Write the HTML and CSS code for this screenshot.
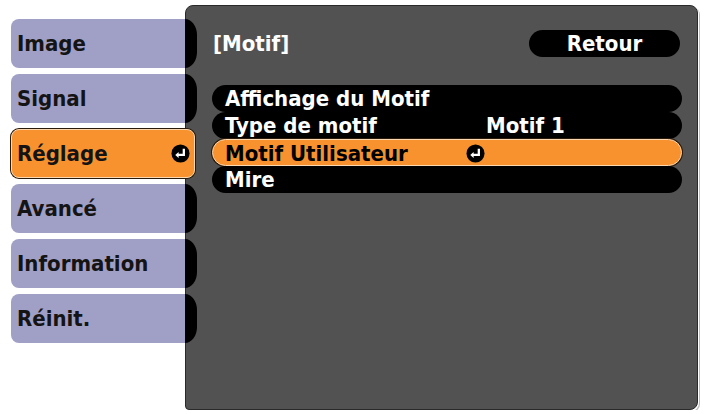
FILE: index.html
```html
<!DOCTYPE html>
<html lang="fr">
<head>
  <meta charset="UTF-8">
  <meta name="viewport" content="width=device-width, initial-scale=1.0">
  <title>Motif</title>
  <link rel="stylesheet" href="styles.css">
</head>
<body>
  <div class="tabs">
    <div class="tab">Image</div>
    <div class="tab">Signal</div>
    <div class="tab active">Réglage
      <svg class="enter" viewBox="0 0 20 20"><circle cx="10" cy="10" r="9.5" fill="#000"/><path d="M13.5 5v6.5H6.5" fill="none" stroke="#fff" stroke-width="2.4"/><path d="M4.5 11.5l3.5-3.2v6.4z" fill="#fff"/></svg>
    </div>
    <div class="tab">Avancé</div>
    <div class="tab">Information</div>
    <div class="tab">Réinit.</div>
  </div>

  <div class="panel">
    <div class="panel-head">
      <div class="panel-title">[Motif]</div>
      <div class="back-btn">Retour</div>
    </div>
    <div class="rows">
      <div class="row"><span class="label">Affichage du Motif</span></div>
      <div class="row"><span class="label">Type de motif</span><span class="value text">Motif 1</span></div>
      <div class="row selected"><span class="label">Motif Utilisateur</span>
        <span class="value">
          <svg class="enter" viewBox="0 0 20 20"><circle cx="10" cy="10" r="9.5" fill="#000"/><path d="M13.5 5v6.5H6.5" fill="none" stroke="#fff" stroke-width="2.4"/><path d="M4.5 11.5l3.5-3.2v6.4z" fill="#fff"/></svg>
        </span>
      </div>
      <div class="row"><span class="label">Mire</span></div>
    </div>
  </div>
</body>
</html>
```

FILE: styles.css
```css
/* General */
body {
  margin: 0;
  padding: 5px 0 0 11px;
  background: white;
  font-family: "DejaVu Sans Condensed", "DejaVu Sans", sans-serif;
  font-weight: bold;
  font-size: 22px;
  display: flex;
  align-items: flex-start;
  overflow: hidden;
}

/* Left tabs */
.tabs {
  margin-top: 14px;
  width: 186px;
  flex-shrink: 0;
  z-index: 1;
  display: flex;
  flex-direction: column;
  gap: 6px;
}

.tab {
  height: 49px;
  display: flex;
  align-items: center;
  justify-content: space-between;
  padding: 0 4px 0 6px;
  color: #141414;
  background: linear-gradient(to right, #a09fc6 174px, #000 174px);
  border-radius: 8px 12px 12px 8px / 8px 16px 16px 8px;
  box-sizing: border-box;
}

.tab.active {
  width: 184px;
  background: #f7922f;
  border: 1px solid #fbd8b0;
  border-radius: 8px;
  box-shadow: 0 0 0 1px #2a1a0a;
  padding-left: 5px;
}

.enter {
  width: 19px;
  height: 19px;
  flex-shrink: 0;
  display: block;
}

/* Right panel */
.panel {
  margin-left: -12px;
  width: 513px;
  height: 405px;
  box-sizing: border-box;
  background: #525252;
  border: 1px solid #2a2a2a;
  border-radius: 8px 8px 8px 4px;
  box-shadow: 1px 1px 0 0 #fff, 2px 2px 0 0 #bcbcbc;
  padding: 24px 17px 0 26px;
  color: white;
}

.panel-head {
  height: 27px;
  display: flex;
  align-items: center;
  justify-content: space-between;
}

.panel-title {
  padding-left: 1px;
}

.back-btn {
  width: 151px;
  height: 27px;
  line-height: 27px;
  background: #000;
  border-radius: 14px;
  text-align: center;
}

.rows {
  margin-top: 28px;
  margin-right: -2px;
}

.row {
  height: 27px;
  line-height: 27px;
  background: #000;
  border-radius: 14px;
  padding-left: 13px;
  display: grid;
  grid-template-columns: 241px 1fr;
  align-items: center;
}

.row .value {
  display: flex;
  align-items: center;
}

.row .value.text {
  padding-left: 20px;
}

.row.selected {
  background: #f7922f;
  color: #000;
  border: 1px solid #fbd8b0;
  box-shadow: 0 0 0 1px #2a1a0a;
  box-sizing: border-box;
  padding-left: 12px;
}
```
